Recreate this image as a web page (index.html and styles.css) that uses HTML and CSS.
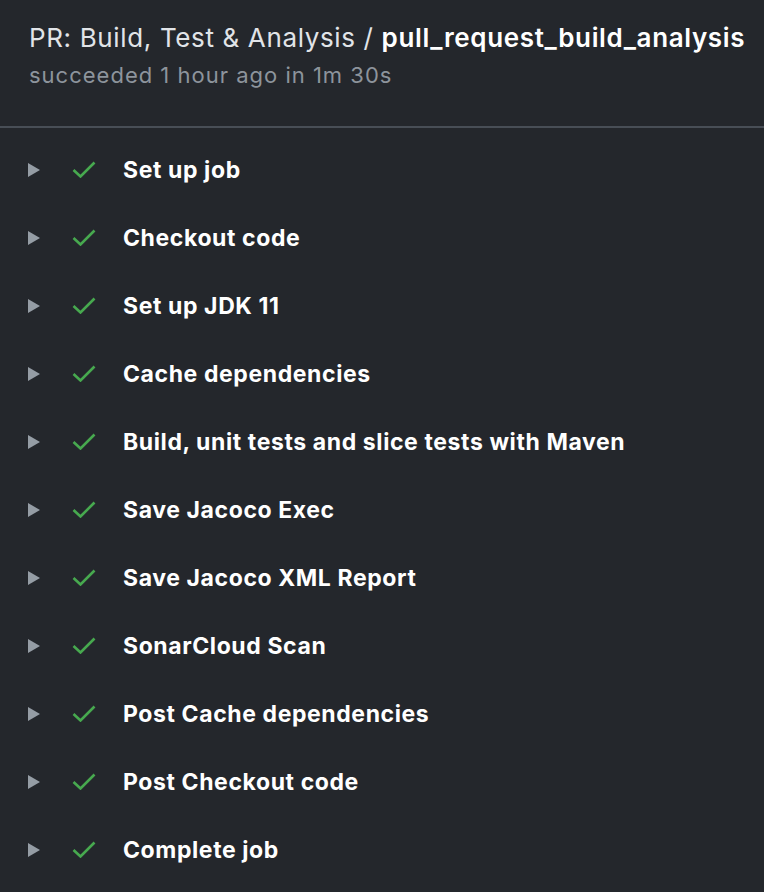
FILE: index.html
```html
<!DOCTYPE html>
<html>
<head>
<meta charset="utf-8">
<link rel="stylesheet" href="styles.css">
</head>
<body>
<div class="panel">
  <header class="head">
    <h1 class="title">PR: Build, Test &amp; Analysis / <strong>pull_request_build_analysis</strong></h1>
    <div class="sub">succeeded 1 hour ago in 1m 30s</div>
  </header>
  <ul class="steps">
    <li class="step"><span class="tri"></span><svg class="check" viewBox="0 0 24 17"><path d="M1.5 9 L8.5 15.5 L22.5 1.5" fill="none" stroke="#47a94f" stroke-width="2.6"/></svg><span class="name">Set up job</span></li>
    <li class="step"><span class="tri"></span><svg class="check" viewBox="0 0 24 17"><path d="M1.5 9 L8.5 15.5 L22.5 1.5" fill="none" stroke="#47a94f" stroke-width="2.6"/></svg><span class="name">Checkout code</span></li>
    <li class="step"><span class="tri"></span><svg class="check" viewBox="0 0 24 17"><path d="M1.5 9 L8.5 15.5 L22.5 1.5" fill="none" stroke="#47a94f" stroke-width="2.6"/></svg><span class="name">Set up JDK 11</span></li>
    <li class="step"><span class="tri"></span><svg class="check" viewBox="0 0 24 17"><path d="M1.5 9 L8.5 15.5 L22.5 1.5" fill="none" stroke="#47a94f" stroke-width="2.6"/></svg><span class="name">Cache dependencies</span></li>
    <li class="step"><span class="tri"></span><svg class="check" viewBox="0 0 24 17"><path d="M1.5 9 L8.5 15.5 L22.5 1.5" fill="none" stroke="#47a94f" stroke-width="2.6"/></svg><span class="name">Build, unit tests and slice tests with Maven</span></li>
    <li class="step"><span class="tri"></span><svg class="check" viewBox="0 0 24 17"><path d="M1.5 9 L8.5 15.5 L22.5 1.5" fill="none" stroke="#47a94f" stroke-width="2.6"/></svg><span class="name">Save Jacoco Exec</span></li>
    <li class="step"><span class="tri"></span><svg class="check" viewBox="0 0 24 17"><path d="M1.5 9 L8.5 15.5 L22.5 1.5" fill="none" stroke="#47a94f" stroke-width="2.6"/></svg><span class="name">Save Jacoco XML Report</span></li>
    <li class="step"><span class="tri"></span><svg class="check" viewBox="0 0 24 17"><path d="M1.5 9 L8.5 15.5 L22.5 1.5" fill="none" stroke="#47a94f" stroke-width="2.6"/></svg><span class="name">SonarCloud Scan</span></li>
    <li class="step"><span class="tri"></span><svg class="check" viewBox="0 0 24 17"><path d="M1.5 9 L8.5 15.5 L22.5 1.5" fill="none" stroke="#47a94f" stroke-width="2.6"/></svg><span class="name">Post Cache dependencies</span></li>
    <li class="step"><span class="tri"></span><svg class="check" viewBox="0 0 24 17"><path d="M1.5 9 L8.5 15.5 L22.5 1.5" fill="none" stroke="#47a94f" stroke-width="2.6"/></svg><span class="name">Post Checkout code</span></li>
    <li class="step"><span class="tri"></span><svg class="check" viewBox="0 0 24 17"><path d="M1.5 9 L8.5 15.5 L22.5 1.5" fill="none" stroke="#47a94f" stroke-width="2.6"/></svg><span class="name">Complete job</span></li>
  </ul>
</div>
</body>
</html>
```

FILE: styles.css
```css
html, body {
  margin: 0;
  padding: 0;
  background: #24272c;
}
.panel {
  width: 764px;
  height: 892px;
  overflow: hidden;
  background: #24272c;
  font-family: Inter, "Noto Sans", sans-serif;
}
.head {
  height: 128px;
  border-bottom: 2px solid #484e56;
  padding: 22px 0 0 29px;
  box-sizing: border-box;
}
.title {
  margin: 0;
  font-size: 26px;
  line-height: 32px;
  font-weight: 400;
  color: #e1e4e8;
  white-space: nowrap;
  letter-spacing: 0.64px;
}
.title strong {
  font-weight: 600;
  color: #ffffff;
}
.sub {
  margin-top: 7px;
  font-size: 22px;
  line-height: 28px;
  color: #8d949c;
  letter-spacing: 1px;
}
.steps {
  list-style: none;
  margin: 0;
  padding: 8px 0 0 0;
}
.step {
  height: 68px;
  display: flex;
  align-items: center;
  padding-left: 28px;
}
.tri {
  width: 0;
  height: 0;
  border-top: 7px solid transparent;
  border-bottom: 7px solid transparent;
  border-left: 12px solid #959da5;
}
.check {
  width: 24px;
  height: 17px;
  margin-left: 32px;
  margin-top: -2px;
}
.name {
  margin-left: 27px;
  font-size: 23px;
  font-weight: 700;
  color: #ffffff;
  white-space: nowrap;
  letter-spacing: 0.6px;
}
```
